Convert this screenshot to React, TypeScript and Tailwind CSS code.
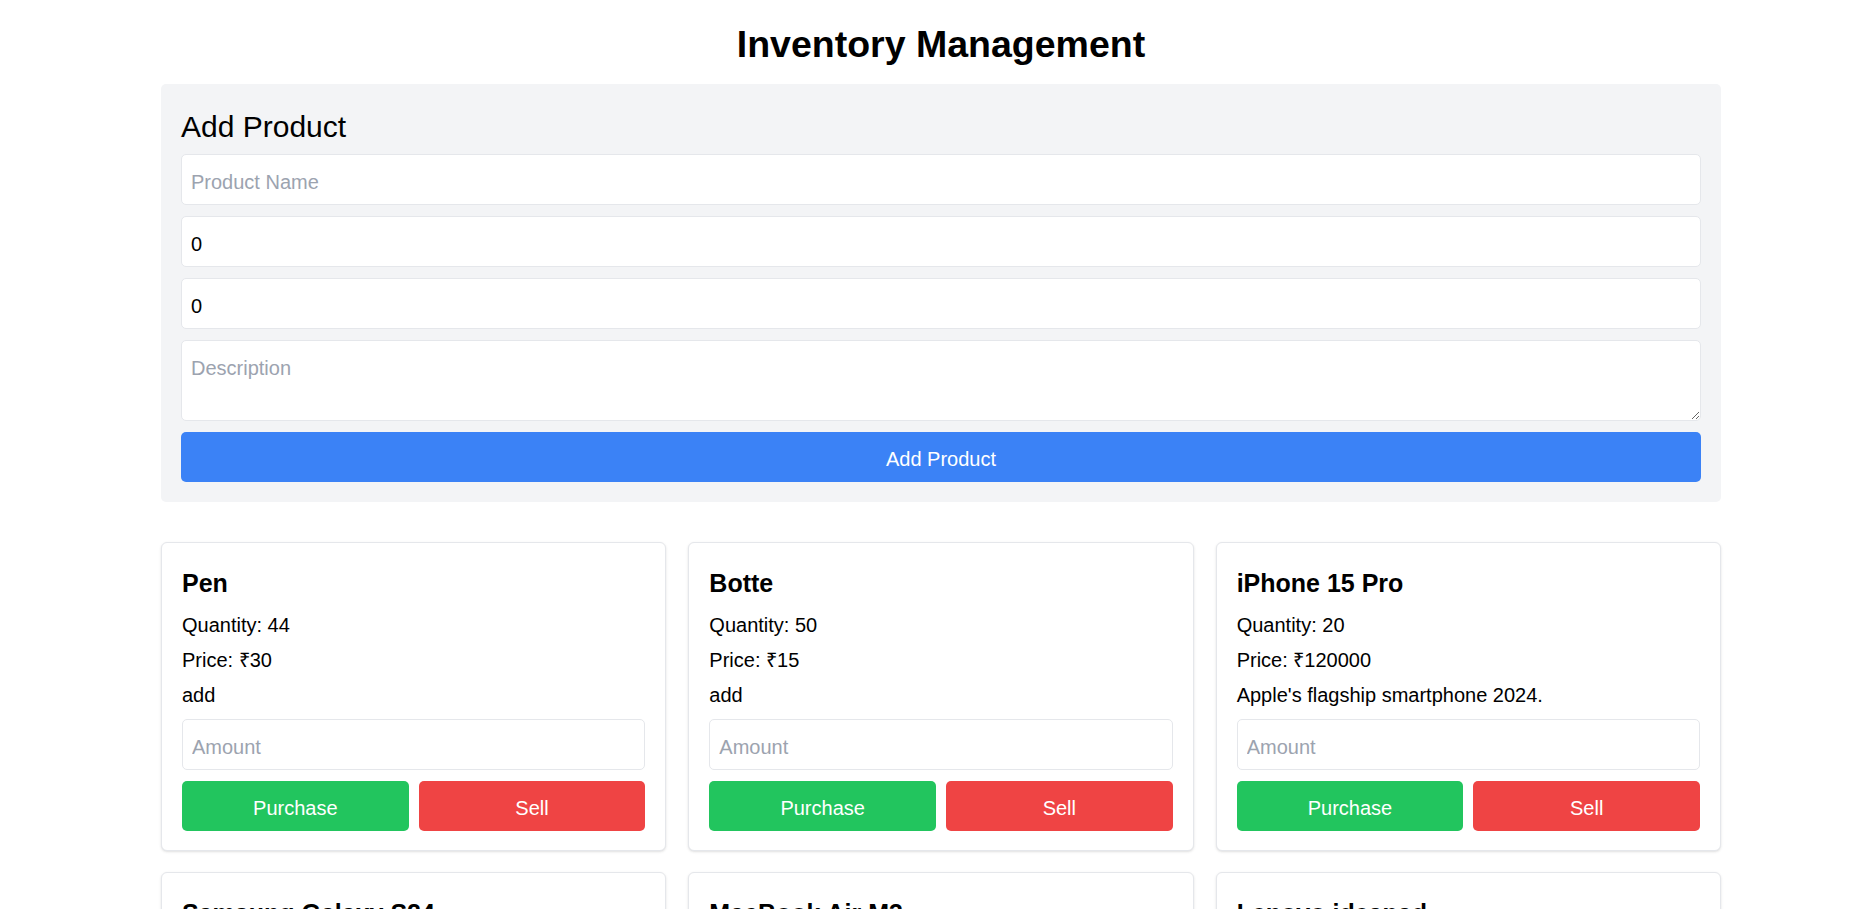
import React from "react";

type Product = {
  name: string;
  quantity: number;
  price: number;
  description: string;
};

const products: Product[] = [
  { name: "Pen", quantity: 44, price: 30, description: "add" },
  { name: "Botte", quantity: 50, price: 15, description: "add" },
  { name: "iPhone 15 Pro", quantity: 20, price: 120000, description: "Apple's flagship smartphone 2024." },
  { name: "Samsung Galaxy S24", quantity: 25, price: 80000, description: "Samsung's latest Android flagship." },
  { name: "MacBook Air M3", quantity: 10, price: 115000, description: "Lightweight laptop with Apple M3 chip." },
  { name: "Lenovo ideapad", quantity: 15, price: 55000, description: "Everyday laptop for work and study." },
];

function ProductCard({ p }: { p: Product }) {
  return (
    <div className="bg-white border border-[#e5e7eb] rounded-[6px] shadow-[0_1px_3px_0_rgba(0,0,0,0.1),0_1px_2px_-1px_rgba(0,0,0,0.1)] px-[20px] pt-[21px] pb-[19px] flex flex-col">
      <h2 className="text-[25px] font-bold leading-[38px] mb-[8px] text-black">{p.name}</h2>
      <p className="text-[20px] leading-[30px] mb-[5px]">Quantity: {p.quantity}</p>
      <p className="text-[20px] leading-[30px] mb-[5px]">Price: ₹{p.price}</p>
      <p className="text-[20px] leading-[30px]">{p.description}</p>
      <input
        type="number"
        placeholder="Amount"
        className="mt-[9px] block w-full h-[51px] bg-white border border-[#e5e7eb] rounded-[5px] px-[9px] pt-[5px] text-[20px] text-black placeholder:text-[#9ca3af] outline-none"
      />
      <div className="mt-[11px] flex gap-[10px]">
        <button className="flex-1 h-[50px] rounded-[5px] bg-[#22c55e] text-white text-[20px] pt-[3px]">
          Purchase
        </button>
        <button className="flex-1 h-[50px] rounded-[5px] bg-[#ef4444] text-white text-[20px] pt-[3px]">
          Sell
        </button>
      </div>
    </div>
  );
}

export default function App() {
  return (
    <div className="min-h-screen bg-white text-black font-['Liberation_Sans',Arial,sans-serif] pt-[22px] pb-[40px]">
      <div className="ml-[161px] w-[1560px]">
        <h1 className="text-center text-[37.5px] font-bold leading-[45px] mb-[17px]">
          Inventory Management
        </h1>

        <div className="bg-[#f3f4f6] rounded-[5px] p-[20px] mb-[40px]">
          <h2 className="text-[30px] leading-[40px] pt-[3px] mb-[7px]">Add Product</h2>
          <div className="flex flex-col gap-[11px]">
            <input
              type="text"
              placeholder="Product Name"
              className="block w-full h-[51px] bg-white border border-[#e5e7eb] rounded-[5px] px-[9px] pt-[6px] text-[20px] text-black placeholder:text-[#9ca3af] outline-none"
            />
            <input
              type="number"
              defaultValue={0}
              className="block w-full h-[51px] bg-white border border-[#e5e7eb] rounded-[5px] px-[9px] pt-[6px] text-[20px] text-black placeholder:text-[#9ca3af] outline-none"
            />
            <input
              type="number"
              defaultValue={0}
              className="block w-full h-[51px] bg-white border border-[#e5e7eb] rounded-[5px] px-[9px] pt-[6px] text-[20px] text-black placeholder:text-[#9ca3af] outline-none"
            />
            <textarea
              placeholder="Description"
              className="block w-full h-[81px] bg-white border border-[#e5e7eb] rounded-[5px] px-[9px] pt-[12px] pb-[8px] text-[20px] leading-[30px] text-black placeholder:text-[#9ca3af] outline-none"
            />
            <button className="w-full h-[50px] rounded-[5px] bg-[#3b82f6] text-white text-[20px] pt-[3px]">
              Add Product
            </button>
          </div>
        </div>

        <div className="grid grid-cols-3 gap-x-[22px] gap-y-[21px]">
          {products.map((p) => (
            <ProductCard key={p.name} p={p} />
          ))}
        </div>
      </div>
    </div>
  );
}
